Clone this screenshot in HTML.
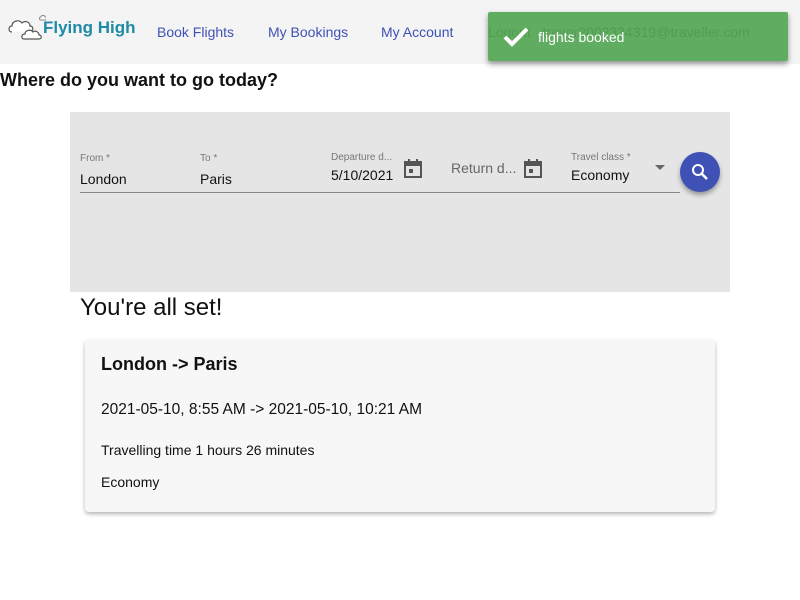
<!DOCTYPE html>
<html><head><style>
*{margin:0;padding:0;box-sizing:border-box}
body{width:800px;height:600px;background:#fff;font-family:"Liberation Sans",sans-serif;position:relative;overflow:hidden}
.abs{position:absolute;white-space:nowrap}
.nav{position:absolute;left:0;top:0;width:800px;height:64px;background:#f4f4f4}
.link{color:#3f51b5;font-size:14px;top:24px}
.lbl{font-size:10px;color:#777}
.val{font-size:14px;color:#111}
</style></head><body>
<div class="nav"></div>
<svg class="abs" style="left:6px;top:12px" width="40" height="30" viewBox="0 0 40 30"><path d="M6 20c-4 0-4-6 0-6 0-5 7-7 10-3 3-3 8-1 8 3 3 0 4 4 1 5" fill="#fff" stroke="#555" stroke-width="1.2"/><path d="M18 27c-3 0-3-5 1-5 0-4 6-5 8-2 2-2 6 0 6 3 3 0 3 4 0 4z" fill="#fff" stroke="#555" stroke-width="1.2"/><path d="M35 8c-2 0-2-3 0-3 0-2 4-2 4 0 2 0 2 3 0 3z" fill="#fff" stroke="#888"/></svg>
<div class="abs" style="left:43px;top:18px;font-size:17px;font-weight:bold;color:#1e8aa6">Flying High</div>
<div class="abs link" style="left:157px">Book Flights</div>
<div class="abs link" style="left:268px">My Bookings</div>
<div class="abs link" style="left:381px">My Account</div>
<div class="abs" style="left:488px;top:24px;font-size:14px;color:#555">Logout &nbsp; trevor2003334319@traveller.com</div>
<div class="abs" style="left:488px;top:12px;width:300px;height:49px;background:rgba(80,165,82,.9);border-radius:2px;box-shadow:0 3px 6px rgba(0,0,0,.4)"></div>
<svg class="abs" style="left:503px;top:27px" width="26" height="20" viewBox="0 0 26 20"><path d="M2 10l7 7L24 2" fill="none" stroke="#fff" stroke-width="4"/></svg>
<div class="abs" style="left:538px;top:29px;font-size:14px;color:#fff">flights booked</div>
<div class="abs" style="left:0;top:70px;font-size:18px;font-weight:bold;color:#111">Where do you want to go today?</div>
<div class="abs" style="left:70px;top:112px;width:660px;height:180px;background:#e5e5e5"></div>
<div class="abs" style="left:80px;top:192px;width:600px;height:1px;background:#888"></div>
<div class="abs lbl" style="left:80px;top:153px">From *</div><div class="abs val" style="left:80px;top:171px">London</div>
<div class="abs lbl" style="left:200px;top:153px">To *</div><div class="abs val" style="left:200px;top:171px">Paris</div>
<div class="abs lbl" style="left:331px;top:152px">Departure d...</div><div class="abs val" style="left:331px;top:167px;width:66px;overflow:hidden">5/10/2021</div>
<div class="abs" style="left:451px;top:160px;font-size:14px;color:#666">Return d...</div>
<svg class="abs" style="left:404px;top:159px" width="18" height="20" viewBox="0 0 18 20"><rect x="1" y="3" width="16" height="15" fill="none" stroke="#555" stroke-width="2"/><rect x="1" y="3" width="16" height="4" fill="#555"/><rect x="4" y="0" width="2" height="4" fill="#555"/><rect x="12" y="0" width="2" height="4" fill="#555"/><rect x="5" y="10" width="4" height="4" fill="#555"/></svg>
<svg class="abs" style="left:524px;top:159px" width="18" height="20" viewBox="0 0 18 20"><rect x="1" y="3" width="16" height="15" fill="none" stroke="#555" stroke-width="2"/><rect x="1" y="3" width="16" height="4" fill="#555"/><rect x="4" y="0" width="2" height="4" fill="#555"/><rect x="12" y="0" width="2" height="4" fill="#555"/><rect x="5" y="10" width="4" height="4" fill="#555"/></svg>
<div class="abs lbl" style="left:571px;top:152px">Travel class *</div><div class="abs val" style="left:571px;top:167px">Economy</div>
<div class="abs" style="left:655px;top:165px;width:0;height:0;border-left:5px solid transparent;border-right:5px solid transparent;border-top:5px solid #666"></div>
<div class="abs" style="left:680px;top:152px;width:40px;height:40px;border-radius:50%;background:#3f51b5;box-shadow:0 3px 5px rgba(0,0,0,.35)"></div>
<svg class="abs" style="left:690px;top:162px" width="20" height="20" viewBox="0 0 20 20"><circle cx="8" cy="8" r="5" fill="none" stroke="#fff" stroke-width="2"/><path d="M12 12l5 5" stroke="#fff" stroke-width="2.5"/></svg>
<div class="abs" style="left:80px;top:294px;font-size:24px;color:#111">You're all set!</div>
<div class="abs" style="left:85px;top:340px;width:630px;height:172px;background:#f7f7f7;border-radius:4px;box-shadow:0 2px 4px rgba(0,0,0,.3)"></div>
<div class="abs" style="left:101px;top:354px;font-size:18px;font-weight:bold;color:#111">London -&gt; Paris</div>
<div class="abs" style="left:101px;top:401px;font-size:15.5px;color:#111">2021-05-10, 8:55 AM -&gt; 2021-05-10, 10:21 AM</div>
<div class="abs" style="left:101px;top:442px;font-size:14px;color:#111">Travelling time 1 hours 26 minutes</div>
<div class="abs" style="left:101px;top:474px;font-size:14px;color:#111">Economy</div>
</body></html>
